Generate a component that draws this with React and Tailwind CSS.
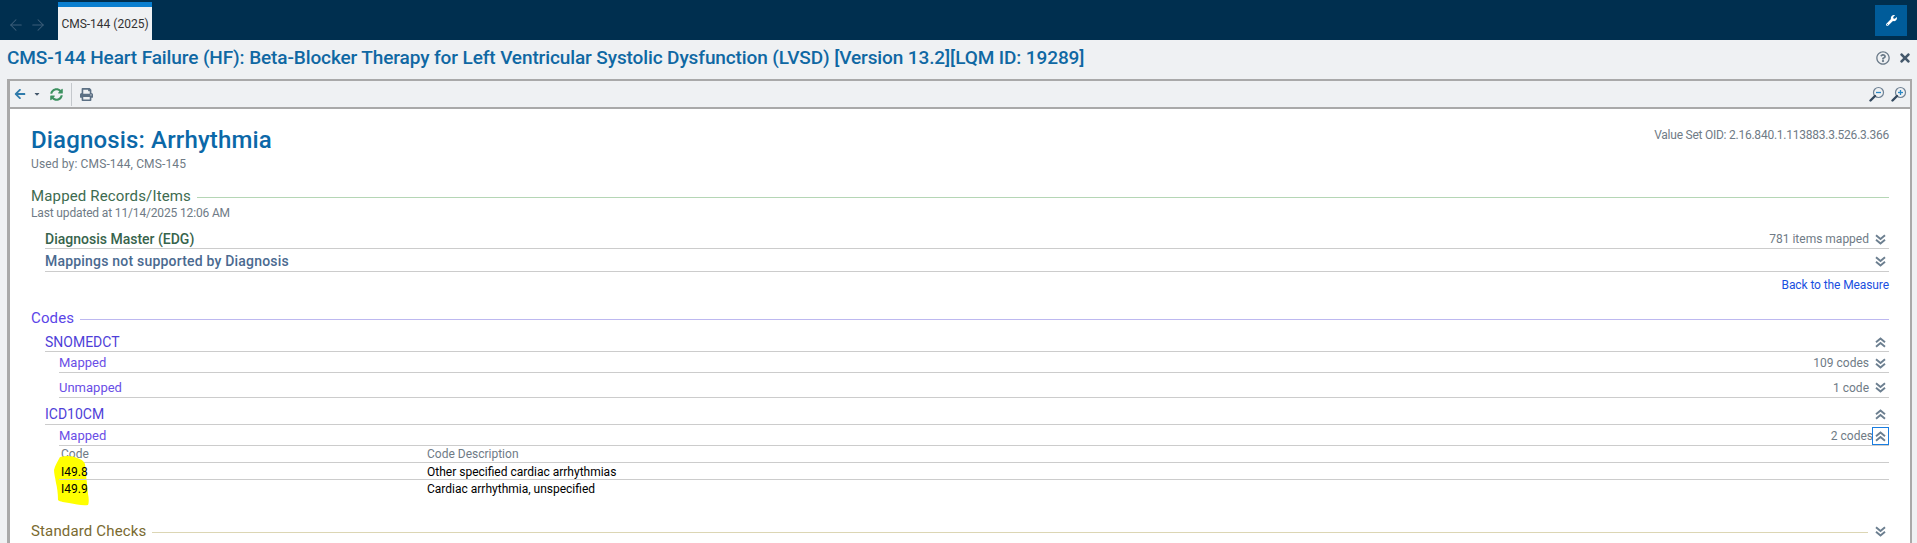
import React from 'react';
import { ArrowLeft, ArrowRight } from 'lucide-react';
import { FaArrowLeft, FaCaretDown, FaSyncAlt, FaPrint, FaWrench, FaTimes, FaRegQuestionCircle } from 'react-icons/fa';

function Chevron({ up }) {
  return (
    <svg width="11" height="11" viewBox="0 0 11 11" fill="none" stroke="#6c7f90" strokeWidth="1.9">
      {up
        ? <path d="M1 5.2L5.5 1.4L10 5.2M1 9.8L5.5 6L10 9.8" />
        : <path d="M1 1.2L5.5 5L10 1.2M1 5.8L5.5 9.6L10 5.8" />}
    </svg>
  );
}

function Row({ label, right, up, focus, color, className }) {
  return (
    <div className={`flex items-center justify-between border-b border-[#cccccc] ${className}`}>
      <span className={color}>{label}</span>
      <div className="flex items-center">
        {right && <span className="text-[12px] leading-4 font-normal text-[#6f7b86]">{right}</span>}
        <span className={`flex items-center justify-center w-[17px] h-[18px] ${focus ? 'border border-[#1a7de0] -ml-[1px]' : 'ml-[3px]'}`}>
          <Chevron up={up} />
        </span>
      </div>
    </div>
  );
}

function SectionTitle({ children, color, line, className }) {
  return (
    <div className={`flex items-center gap-[6px] h-4 ${className}`}>
      <span className={`text-[15px] leading-4 tracking-[0.15px] ${color}`}>{children}</span>
      <div className={`flex-1 h-px mt-[2px] ${line}`} />
    </div>
  );
}

function ZoomIcon({ plus }) {
  return (
    <svg width="16" height="16" viewBox="0 0 16 16" fill="none">
      <circle cx="9.5" cy="6.5" r="5" stroke="#6f8294" strokeWidth="1.2" />
      <path d="M6 10L1.5 14.5" stroke="#34495e" strokeWidth="2.4" strokeLinecap="round" />
      <path d="M7 6.5h5" stroke="#2a86c4" strokeWidth="1.3" />
      {plus && <path d="M9.5 4v5" stroke="#2a86c4" strokeWidth="1.3" />}
    </svg>
  );
}

export default function App() {
  return (
    <div className="h-[543px] overflow-hidden flex flex-col bg-[#eff1f3] font-['Roboto',sans-serif]">
      {/* Top bar */}
      <div className="h-10 shrink-0 bg-[#002f4f] flex items-end justify-between pr-[10px]">
        <div className="flex items-end h-full">
          <div className="flex items-center gap-1 pl-[7px] w-[58px] h-[34px] pt-1 text-[#3d5f7a]">
            <ArrowLeft className="w-[18px] h-[18px]" strokeWidth={1.4} />
            <ArrowRight className="w-[18px] h-[18px]" strokeWidth={1.4} />
          </div>
          <div className="w-[94px] h-[38px] bg-[#eff1f3] border-t-[5px] border-[#0a7fd0] flex items-center justify-center text-[12px] text-[#333333]">
            CMS-144 (2025)
          </div>
        </div>
        <div className="self-start mt-[5px] w-8 h-[31px] bg-[#005c9a] flex items-center justify-center text-white">
          <FaWrench className="w-[11px] h-[11px]" />
        </div>
      </div>

      {/* Title bar */}
      <div className="h-[39px] shrink-0 flex items-center justify-between pl-[7px] pr-[5px] pb-[3px]">
        <h1 className="text-[19px] tracking-[-0.11px] font-medium leading-6 text-[#0f68a3]">
          CMS-144 Heart Failure (HF): Beta-Blocker Therapy for Left Ventricular Systolic Dysfunction (LVSD) [Version 13.2][LQM ID: 19289]
        </h1>
        <div className="flex items-center gap-[8px] text-[#44586b]">
          <FaRegQuestionCircle className="w-[14px] h-[14px] text-[#6a7a88]" />
          <FaTimes className="w-[14px] h-[14px]" />
        </div>
      </div>

      {/* Panel */}
      <div className="flex-1 mr-[5px] ml-[7px] flex flex-col border-2 border-b-0 border-[#a9a9a9] border-l-[3px] min-h-0">
        <div className="h-[28px] shrink-0 flex items-center justify-between border-b-2 border-[#a9a9a9] pl-[4px] pr-[3px]">
          <div className="flex items-center h-full">
            <FaArrowLeft className="w-[12px] h-[12px] text-[#2f7bab]" />
            <FaCaretDown className="w-[8px] h-[8px] ml-[7px] text-[#44586b]" />
            <FaSyncAlt className="w-[13px] h-[13px] ml-[9px] text-[#3d9160]" />
            <div className="w-px h-[23px] bg-[#c4c8cc] ml-[8px]" />
            <FaPrint className="w-[13px] h-[13px] ml-2 text-[#5c7084]" />
          </div>
          <div className="flex items-center gap-[6px]">
            <ZoomIcon />
            <ZoomIcon plus />
          </div>
        </div>

        <div className="flex-1 bg-white pl-[21px] pr-[21px] pt-[14px] overflow-hidden">
          <div className="flex items-start justify-between h-[33px]">
            <h2 className="text-[24px] tracking-[0.15px] font-medium leading-[33px] mt-px text-[#0b68a8]">Diagnosis: Arrhythmia</h2>
            <span className="text-[12px] tracking-[-0.24px] leading-4 mt-[4px] text-[#6f7b86]">Value Set OID: 2.16.840.1.113883.3.526.3.366</span>
          </div>
          <div className="text-[12px] tracking-[0.14px] leading-4 text-[#6f7b86]">Used by: CMS-144, CMS-145</div>

          <SectionTitle color="text-[#3d6b4f]" line="bg-[#b5d6b5]" className="mt-4">Mapped Records/Items</SectionTitle>
          <div className="text-[12px] tracking-[-0.15px] leading-4 mt-px text-[#6f7b86]">Last updated at 11/14/2025 12:06 AM</div>

          <div className="ml-[14px] text-[14px] font-medium">
            <Row label="Diagnosis Master (EDG)" right="781 items mapped" color="text-[#37644c]" className="h-[19px] mt-[9px]" />
            <Row label="Mappings not supported by Diagnosis" color="text-[#4a6a90] tracking-[0.2px]" className="h-[23px] pt-[3px]" />
          </div>
          <div className="text-right text-[12px] tracking-[-0.1px] leading-4 mt-[5px] text-[#1a4fe0]">Back to the Measure</div>

          <SectionTitle color="text-[#5b45e8]" line="bg-[#bdb8f0]" className="mt-[17px]">Codes</SectionTitle>

          <div className="ml-[14px] text-[14px]">
            <Row label="SNOMEDCT" up color="text-[#4f3fd8]" className="h-[26px] pt-2" />
            <div className="ml-[14px] text-[13px]">
              <Row label="Mapped" right="109 codes" color="text-[#6a4ee6]" className="h-[21px] pt-[2px]" />
              <Row label="Unmapped" right="1 code" color="text-[#6a4ee6]" className="h-[25px] pt-[5px]" />
            </div>
            <Row label="ICD10CM" up color="text-[#4f3fd8]" className="h-[27px] pt-[7px]" />
            <div className="ml-[14px] text-[13px]">
              <Row label="Mapped" right="2 codes" up focus color="text-[#6a4ee6]" className="h-[21px] pt-[2px]" />
              <div className="font-normal text-[12px] leading-4">
                <div className="grid grid-cols-[366px_1fr] h-[17px] pl-[2px] border-b border-[#cccccc] text-[#6f7b86]">
                  <span>Code</span>
                  <span>Code Description</span>
                </div>
                <div className="relative">
                  {/* marker scribble over the two codes */}
                  <svg className="absolute left-[-7px] top-[-8px] w-[38px] h-[52px]" viewBox="-2 0 38 52">
                    <path d="M6 2C13 0 20 1 23 3C27 4 30 6 31 9C32 18 33 30 34 39C35 44 35 48 34 50C28 51 22 49 15 48C11 47 6 47 4 45C4 38 3 32 2 28C1 22 0 18 0 15C1 10 4 6 6 2Z" fill="#ffff00" />
                  </svg>
                  <div className="relative grid grid-cols-[366px_1fr] h-[17px] pl-[2px] pt-px border-b border-[#cccccc] text-black">
                    <span>I49.8</span>
                    <span>Other specified cardiac arrhythmias</span>
                  </div>
                  <div className="relative grid grid-cols-[366px_1fr] h-[17px] pl-[2px] pt-px text-black">
                    <span>I49.9</span>
                    <span>Cardiac arrhythmia, unspecified</span>
                  </div>
                </div>
              </div>
            </div>
          </div>

          <div className="flex items-center mt-[26px]">
            <SectionTitle color="text-[#7a6a30]" line="bg-[#dcd6b4]" className="flex-1">Standard Checks</SectionTitle>
            <span className="flex items-center justify-center w-[21px] pl-1"><Chevron /></span>
          </div>
        </div>
      </div>
    </div>
  );
}
